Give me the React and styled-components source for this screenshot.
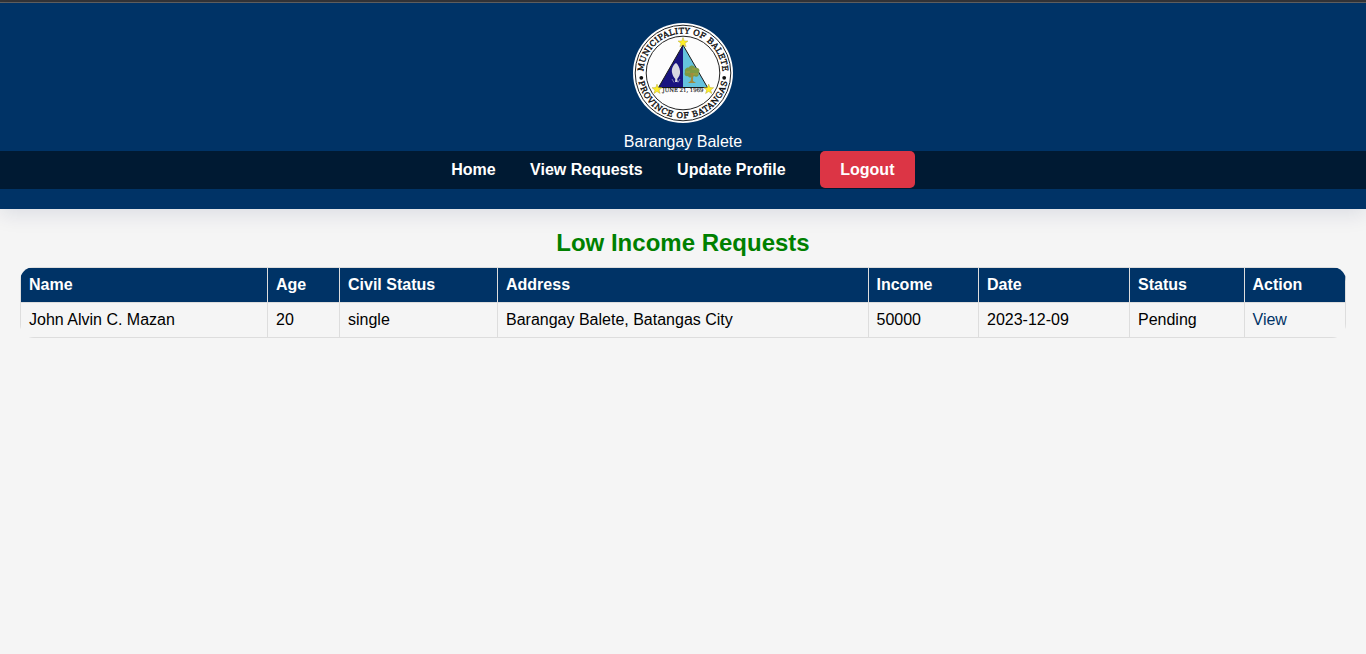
import React from "react";
import styled, { createGlobalStyle } from "styled-components";

const GlobalStyle = createGlobalStyle`
  * { box-sizing: border-box; }
  body {
    margin: 0;
    background: #f5f5f5;
    color: #000;
    font: 16px/18px "Liberation Sans", Arial, sans-serif;
    overflow: hidden;
  }
`;

const TopStrip = styled.div`
  height: 3px;
  background: #333436;
  border-bottom: 1px solid #60605f;
`;

const Header = styled.header`
  display: flex;
  flex-direction: column;
  align-items: center;
  height: 206px;
  padding: 20px 0;
  background: #003366;
  color: #fff;
  box-shadow: 0 5px 20px rgba(0, 30, 80, 0.11);
`;

const Seal = styled.svg`
  display: block;
  width: 100px;
  height: 100px;
  flex: none;
`;

const RingText = styled.text`
  font: 8px "DejaVu Serif", serif;
  fill: #111;
  stroke: #111;
  stroke-width: 0.4px;
`;

const DateText = styled.text`
  font: 5.8px "DejaVu Serif", serif;
  fill: #111;
  stroke: #111;
  stroke-width: 0.15px;
`;

const PlaceName = styled.div`
  margin-top: 10px;
  height: 18px;
`;

const Nav = styled.nav`
  display: flex;
  justify-content: center;
  gap: 34.4px;
  width: 100%;
  height: 38px;
  background: #001a33;
`;

const NavLink = styled.a`
  height: 37px;
  line-height: 37px;
  color: #fff;
  font-weight: bold;
  text-decoration: none;
`;

const LogoutLink = styled(NavLink)`
  padding: 0 20.3px;
  border-radius: 5px;
  background: #dc3545;
`;

const Main = styled.main`
  padding: 20px 20px 0;
`;

const Title = styled.h2`
  margin: 0 0 10px;
  font-size: 24px;
  line-height: 28px;
  text-align: center;
  color: #008000;
`;

const Table = styled.table`
  width: 1326px;
  table-layout: fixed;
  border-collapse: collapse;
  border-radius: 14px;
  overflow: hidden;
`;

const Col = styled.col`
  width: ${(p) => p.$width}px;
`;

const HeadCell = styled.th`
  padding: 8px;
  border: 1px solid #ddd;
  background: #003366;
  color: #fff;
  text-align: left;

  &:nth-child(5), &:last-child { padding-left: 7.5px; }
`;

const Cell = styled.td`
  padding: 8px;
  border: 1px solid #ddd;

  &:nth-child(5), &:last-child { padding-left: 7.5px; }
`;

const ViewLink = styled.a`
  color: #003366;
  text-decoration: none;
`;

const columns = [
  ["Name", 247], ["Age", 72], ["Civil Status", 158], ["Address", 371],
  ["Income", 110], ["Date", 151], ["Status", 115], ["Action", 101],
];

const request = [
  "John Alvin C. Mazan", "20", "single", "Barangay Balete, Batangas City",
  "50000", "2023-12-09", "Pending",
];

const STAR = "M0-5.2 1.25-1.7 5-1.6 2 .8 3.1 4.2 0 2.2-3.1 4.2-2 .8-5-1.6-1.25-1.7Z";

function MunicipalSeal() {
  return (
    <Seal viewBox="0 0 100 100" role="img" aria-label="Municipality of Balete seal">
      <defs>
        <path id="upper-arc" d="M10.7 54A39.5 39.5 0 1 1 89.3 54" />
        <path id="lower-arc" d="M4.8 50A45.2 45.2 0 0 0 95.2 50" />
      </defs>
      <circle cx="50" cy="50" r="50" fill="#fff" />
      <circle cx="50" cy="50" r="47.8" fill="none" stroke="#222" strokeWidth="1" />
      <circle cx="50" cy="50" r="36.8" fill="#fdfdfd" stroke="#222" strokeWidth="1" />
      <RingText textAnchor="middle">
        <textPath href="#upper-arc" startOffset="50%" textLength="121" lengthAdjust="spacing">MUNICIPALITY OF BALETE</textPath>
      </RingText>
      <RingText textAnchor="middle">
        <textPath href="#lower-arc" startOffset="50%" textLength="124" lengthAdjust="spacing">PROVINCE OF BATANGAS</textPath>
      </RingText>
      <circle cx="8.3" cy="54.8" r="1.9" fill="#111" />
      <circle cx="91.2" cy="54.8" r="1.9" fill="#111" />
      <path d="M50 22V64.5H25.5Z" fill="#191480" />
      <path d="M50 22V64.5H74.5Z" fill="#65c3dd" />
      <path d="M50 22 25.5 64.5H74.5Z" fill="none" stroke="#191919" strokeWidth="1" />
      <path d="M43 40C40 42 38.3 46 39 49.5 39.3 52 41 54.5 42.3 56L42 59H44.7L44.2 56C46 54 47.5 51 47 48 46.7 44 44.5 41 43 40Z" fill="#d8d8e1" />
      <path d="M39 56 41 59.5M47 56 45 59.5" stroke="#a5a5c6" strokeWidth=".7" />
      <path d="M52 49C51 46 54 44 56 44.5 57 41.5 62 42 62 45 66 44 68 48 65.3 50 67 53 63 55 61 53 59 55 56 55 55 53 52 54 51 51 52 49Z" fill="#7c9a45" />
      <path d="M57 50 58.3 54 57.5 58 55 60H63L60 58 60.2 53 61.5 50" fill="#a18a3d" />
      <path d="M53 49H57M59 46H63M60 51H65" stroke="#a6a13c" strokeWidth="1" />
      {[[50, 19.6], [24, 66.3], [75.7, 66.3]].map(([x, y]) => (
        <path key={x} d={STAR} transform={`translate(${x} ${y})`} fill="#ffef29" stroke="#a69a27" strokeWidth=".4" />
      ))}
      <DateText x="50" y="69.3" textAnchor="middle" textLength="41" lengthAdjust="spacingAndGlyphs">JUNE 21, 1969</DateText>
    </Seal>
  );
}

export default function App() {
  return (
    <>
      <GlobalStyle />
      <TopStrip />
      <Header>
        <MunicipalSeal />
        <PlaceName>Barangay Balete</PlaceName>
        <Nav>
          <NavLink href="#">Home</NavLink>
          <NavLink href="#">View Requests</NavLink>
          <NavLink href="#">Update Profile</NavLink>
          <LogoutLink href="#">Logout</LogoutLink>
        </Nav>
      </Header>
      <Main>
        <Title>Low Income Requests</Title>
        <Table>
          <colgroup>
            {columns.map(([name, width]) => <Col key={name} $width={width} />)}
          </colgroup>
          <thead>
            <tr>{columns.map(([name]) => <HeadCell key={name}>{name}</HeadCell>)}</tr>
          </thead>
          <tbody>
            <tr>
              {request.map((value) => <Cell key={value}>{value}</Cell>)}
              <Cell><ViewLink href="#">View</ViewLink></Cell>
            </tr>
          </tbody>
        </Table>
      </Main>
    </>
  );
}
